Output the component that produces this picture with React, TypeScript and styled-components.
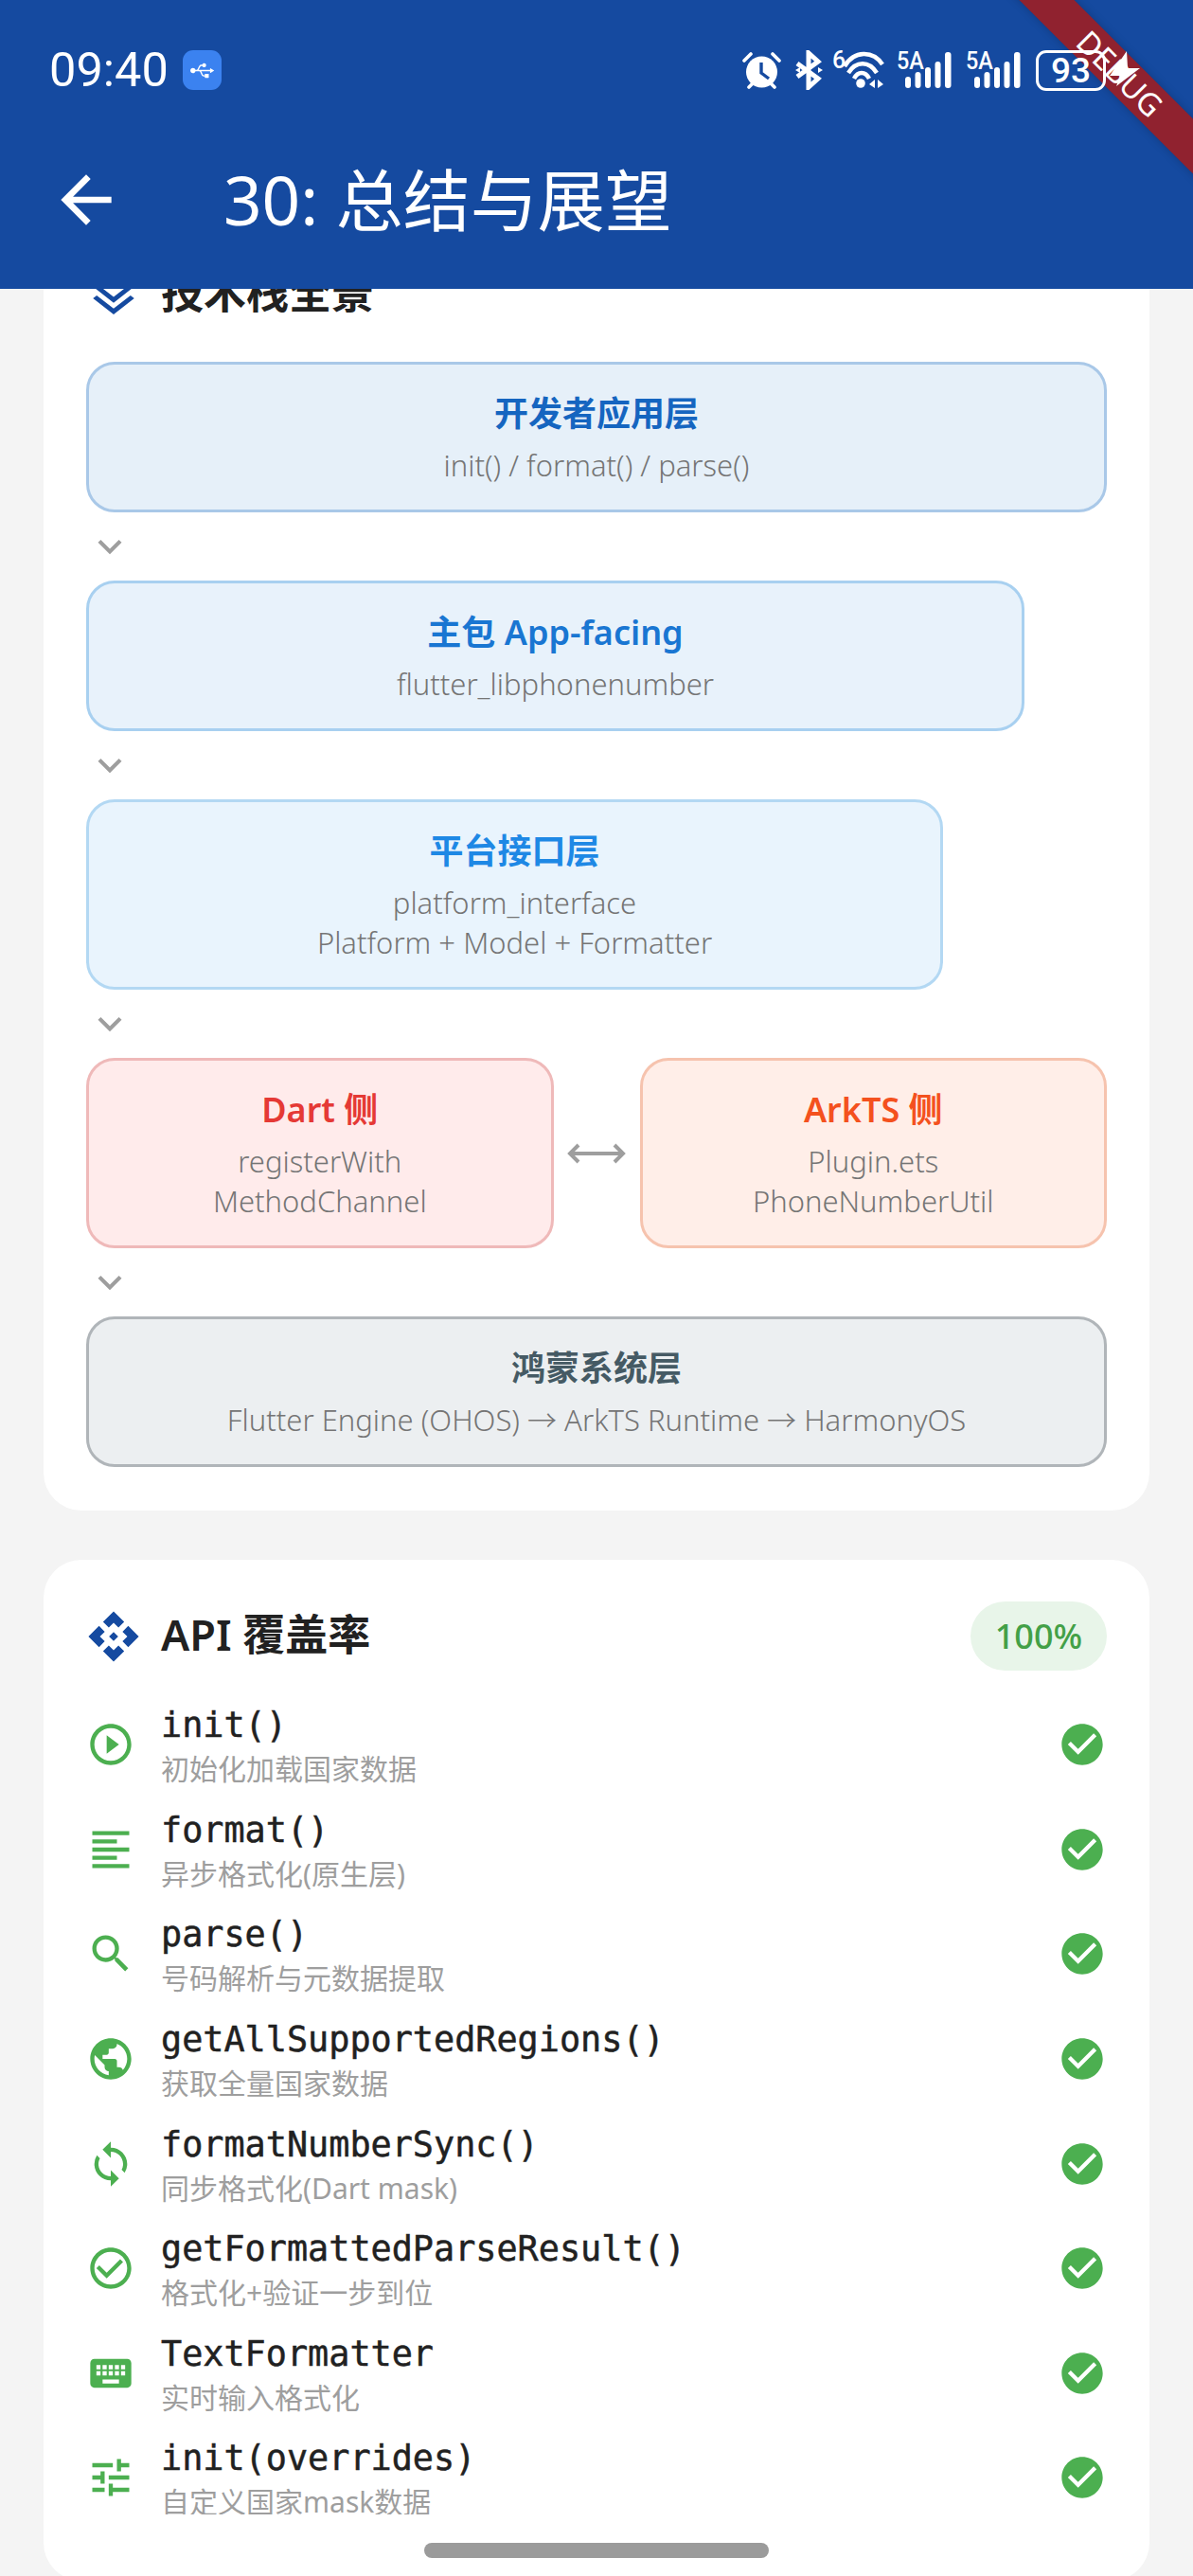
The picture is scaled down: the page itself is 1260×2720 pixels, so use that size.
import styled, { createGlobalStyle } from 'styled-components'
import { ReactNode } from 'react'
import { FaUsb } from 'react-icons/fa'
import {
    MdApi,
    MdArrowBack,
    MdCheckCircle,
    MdCheckCircleOutline,
    MdFormatAlignLeft,
    MdKeyboard,
    MdKeyboardArrowDown,
    MdOutlineLayers,
    MdPlayCircleOutline,
    MdPublic,
    MdSearch,
    MdSync,
    MdTune,
} from 'react-icons/md'

const SANS = `"Noto Sans", "Noto Sans CJK SC", sans-serif`
const MONO = `"DejaVu Sans Mono", "Noto Sans CJK SC", monospace`

const GlobalStyle = createGlobalStyle`
    html, body {
        margin: 0;
        padding: 0;
        background: #f4f4f4;
        font-family: ${SANS};
    }
`

const apis = [
    { icon: <MdPlayCircleOutline />, name: 'init()', desc: '初始化加载国家数据' },
    { icon: <MdFormatAlignLeft />, name: 'format()', desc: '异步格式化(原生层)' },
    { icon: <MdSearch />, name: 'parse()', desc: '号码解析与元数据提取' },
    { icon: <MdPublic />, name: 'getAllSupportedRegions()', desc: '获取全量国家数据' },
    { icon: <MdSync />, name: 'formatNumberSync()', desc: '同步格式化(Dart mask)' },
    { icon: <MdCheckCircleOutline />, name: 'getFormattedParseResult()', desc: '格式化+验证一步到位' },
    { icon: <MdKeyboard />, name: 'TextFormatter', desc: '实时输入格式化' },
    { icon: <MdTune />, name: 'init(overrides)', desc: '自定义国家mask数据' },
]

const SignalIcon = () => (
    <Signal>
        <SignalLabel>5A</SignalLabel>
        <svg width="58" height="42" viewBox="0 0 58 42" fill="#fff">
            <rect x="9" y="28" width="6" height="12" rx="3" />
            <rect x="19.500" y="23" width="6" height="17" rx="3" />
            <rect x="30" y="18" width="6" height="22" rx="3" />
            <rect x="40.500" y="12" width="6" height="28" rx="3" />
            <rect x="51" y="2" width="6.500" height="38" rx="3" />
        </svg>
    </Signal>
)

const StatusIcons = () => (
    <StatusRight>
        <StatusItem>
            <svg width="41" height="42" viewBox="0 0 41 42" fill="#fff">
                <circle cx="20.500" cy="23" r="16.500" />
                <path d="M20 13v11l8 6" fill="none" stroke="#154aa0" strokeWidth="3.400" />
                <path d="M2 11 9 4M39 11 32 4M7 39l4-4M34 39l-4-4" stroke="#fff" strokeWidth="3.600" strokeLinecap="round" />
            </svg>
        </StatusItem>
        <StatusItem $gap={15}>
            <svg width="29" height="42" viewBox="0 0 29 42" fill="none" stroke="#fff" strokeWidth="5">
                <path d="M2 14 24 30 14 39V3l10 9L2 28" />
                <path d="M0 21l5-3v6zM29 21l-5-3v6z" fill="#fff" stroke="none" />
            </svg>
        </StatusItem>
        <StatusItem $gap={11}>
            <WifiLabel>6</WifiLabel>
            <svg width="54" height="42" viewBox="0 0 54 42" fill="none" stroke="#fff" strokeWidth="4.500">
                <path d="M12 17C22 0 42 0 52 15" />
                <path d="M16 24C24 11 38 11 46 24" />
                <path d="M22 30C26 22 34 22 38 30" />
                <circle cx="29" cy="35" r="4.800" fill="#fff" stroke="none" />
                <path d="M38 36l6-5v9zM47 31l6 5-6 4z" fill="#fff" stroke="none" />
            </svg>
        </StatusItem>
        <StatusItem $gap={13}>
            <SignalIcon />
        </StatusItem>
        <StatusItem $gap={15}>
            <SignalIcon />
        </StatusItem>
        <StatusItem $gap={16}>
            <Battery>93</Battery>
        </StatusItem>
        <StatusItem $gap={2}>
            <svg width="34" height="42" viewBox="0 0 34 42" fill="#fff">
                <path d="M20 1 2 27h11L9 38 34 19H21z" />
            </svg>
        </StatusItem>
    </StatusRight>
)

const tones = {
    app: { bg: '#e6f0f9', border: '#a9c8e8', title: '#1565c0' },
    main: { bg: '#e8f2fb', border: '#a8d0f0', title: '#1976d2' },
    iface: { bg: '#e9f4fd', border: '#b3d8f3', title: '#1e88e5' },
    dart: { bg: '#ffebeb', border: '#efb9b9', title: '#e53935' },
    ark: { bg: '#ffeee8', border: '#f6c3ae', title: '#f4511e' },
    system: { bg: '#eceff1', border: '#b0b5b9', title: '#455a64' },
}

type LayerProps = {
    title: string
    lines: string[]
    tone: keyof typeof tones
    inset?: number
}

const Layer = ({ title, lines, tone, inset = 0 }: LayerProps) => (
    <LayerBox $tone={tone} $inset={inset}>
        <LayerTitle $tone={tone}>{title}</LayerTitle>
        {lines.map((line) => (
            <LayerLine key={line}>{line}</LayerLine>
        ))}
    </LayerBox>
)

const Down = () => (
    <DownRow>
        <MdKeyboardArrowDown />
    </DownRow>
)

const CardHeader = ({ icon, title, tall, children }: { icon: ReactNode; title: string; tall?: boolean; children?: ReactNode }) => (
    <HeaderRow $tall={tall}>
        <HeaderIcon>{icon}</HeaderIcon>
        <HeaderTitle>{title}</HeaderTitle>
        {children}
    </HeaderRow>
)

export default function App() {
    return (
        <Page>
            <GlobalStyle />
            <AppBar>
                <DebugBand />
                <StatusBar>
                    <StatusLeft>
                        <Clock>09:40</Clock>
                        <UsbBadge>
                            <FaUsb />
                        </UsbBadge>
                    </StatusLeft>
                    <StatusIcons />
                </StatusBar>
                <DebugLabel>DEBUG</DebugLabel>
                <Toolbar>
                    <BackButton>
                        <MdArrowBack />
                    </BackButton>
                    <Title>30: 总结与展望</Title>
                </Toolbar>
            </AppBar>
            <Scroller>
                <Card>
                    <CardHeader icon={<MdOutlineLayers />} title="技术栈全景" />
                    <Stack>
                        <Layer tone="app" title="开发者应用层" lines={['init() / format() / parse()']} />
                        <Down />
                        <Layer tone="main" inset={87} title="主包 App-facing" lines={['flutter_libphonenumber']} />
                        <Down />
                        <Layer
                            tone="iface"
                            inset={173}
                            title="平台接口层"
                            lines={['platform_interface', 'Platform + Model + Formatter']}
                        />
                        <Down />
                        <BridgeRow>
                            <Layer tone="dart" title="Dart 侧" lines={['registerWith', 'MethodChannel']} />
                            <BridgeArrow>
                                <svg width="62" height="24" viewBox="0 0 62 24" fill="none" stroke="#9e9e9e" strokeWidth="4">
                                    <path d="M3 12h56M12 3l-9 9 9 9M50 3l9 9-9 9" />
                                </svg>
                            </BridgeArrow>
                            <Layer tone="ark" title="ArkTS 侧" lines={['Plugin.ets', 'PhoneNumberUtil']} />
                        </BridgeRow>
                        <Down />
                        <Layer
                            tone="system"
                            title="鸿蒙系统层"
                            lines={['Flutter Engine (OHOS) → ArkTS Runtime → HarmonyOS']}
                        />
                    </Stack>
                </Card>
                <Card>
                    <CardHeader icon={<MdApi />} title="API 覆盖率" tall>
                        <Pill>100%</Pill>
                    </CardHeader>
                    <ApiList>
                        {apis.map((api) => (
                            <ApiRow key={api.name}>
                                <ApiIcon>{api.icon}</ApiIcon>
                                <ApiText>
                                    <ApiName>{api.name}</ApiName>
                                    <ApiDesc>{api.desc}</ApiDesc>
                                </ApiText>
                                <ApiIcon>
                                    <MdCheckCircle />
                                </ApiIcon>
                            </ApiRow>
                        ))}
                    </ApiList>
                </Card>
            </Scroller>
            <BottomClip />
            <HomeBar />
        </Page>
    )
}

const Page = styled.div`
    position: relative;
    display: flex;
    flex-direction: column;
    width: 1260px;
    height: 2720px;
    overflow: hidden;
    background: #f4f4f4;
`

const AppBar = styled.header`
    position: relative;
    z-index: 1;
    flex: none;
    height: 305px;
    overflow: hidden;
    background: #154aa0;
    color: #fff;
`

const DebugBand = styled.div`
    position: absolute;
    top: 57px;
    left: 1033px;
    width: 300px;
    height: 41px;
    background: #90222f;
    box-shadow: 0 0 10px rgba(0, 0, 0, 0.22);
    transform: rotate(45deg);
`

const DebugLabel = styled.div`
    position: absolute;
    top: 57px;
    left: 1033px;
    width: 300px;
    color: #fff;
    font: 400 33px/41px 'Noto Sans', sans-serif;
    text-align: center;
    transform: rotate(45deg);
`

const StatusBar = styled.div`
    position: relative;
    display: flex;
    align-items: center;
    justify-content: space-between;
    height: 148px;
    padding: 0 56px 0 52px;
`

const StatusLeft = styled.div`
    display: flex;
    align-items: center;
    gap: 15px;
`

const Clock = styled.span`
    font: 400 50.5px/60px Roboto, sans-serif;
`

const UsbBadge = styled.span`
    display: flex;
    align-items: center;
    justify-content: center;
    width: 41px;
    height: 42px;
    border-radius: 11px;
    background: #3b82f0;
    font-size: 25px;
`

const StatusRight = styled.div`
    display: flex;
    align-items: center;
`

const StatusItem = styled.span<{ $gap?: number }>`
    position: relative;
    display: flex;
    margin-left: ${(p) => p.$gap ?? 0}px;
`

const Signal = styled.span`
    position: relative;
    display: flex;
`

const SignalLabel = styled.span`
    position: absolute;
    top: -4px;
    left: 0;
    font: 500 26px/30px Roboto, sans-serif;
    transform: scaleX(0.9);
    transform-origin: left;
`

const WifiLabel = styled.span`
    position: absolute;
    top: -4px;
    left: -1px;
    font: 500 25px/30px Roboto, sans-serif;
`

const Battery = styled.span`
    display: flex;
    align-items: center;
    justify-content: center;
    box-sizing: border-box;
    width: 74px;
    height: 43px;
    border: 3px solid #fff;
    border-radius: 11px;
    font: 500 37px/37px Roboto, sans-serif;
`

const Toolbar = styled.div`
    display: flex;
    align-items: center;
    height: 125px;
    padding-left: 51px;
`

const BackButton = styled.span`
    display: flex;
    font-size: 80px;
`

const Title = styled.h1`
    margin: 0 0 0 105px;
    font: 400 71px/90px ${SANS};
`

const Scroller = styled.main`
    display: flex;
    flex-direction: column;
    gap: 52px;
    margin-top: -70px;
    padding: 0 46px;
`

const Card = styled.section`
    padding: 46px 45px;
    border-radius: 40px;
    background: #fff;

    & + & {
        padding-top: 44px;
        padding-bottom: 53px;
    }
`

const HeaderRow = styled.div<{ $tall?: boolean }>`
    display: flex;
    align-items: center;
    gap: 21px;
    height: ${(p) => (p.$tall ? 73 : 58)}px;
    margin-bottom: ${(p) => (p.$tall ? 23 : 43)}px;
`

const HeaderIcon = styled.span`
    display: flex;
    color: #154aa0;
    font-size: 58px;
`

const HeaderTitle = styled.h2`
    flex: 1;
    margin: 0;
    padding-bottom: 3px;
    color: #212121;
    font: 600 45px/58px ${SANS};
`

const Pill = styled.span`
    width: 144px;
    border-radius: 37px;
    background: #e8f5e9;
    color: #43a047;
    font: 500 36px/73px ${SANS};
    text-align: center;
`

const Stack = styled.div`
    display: flex;
    flex-direction: column;
`

const LayerBox = styled.div<{ $tone: keyof typeof tones; $inset: number }>`
    flex: 1;
    box-sizing: border-box;
    margin-right: ${(p) => p.$inset}px;
    padding: 30px 0 29px;
    border: 3px solid ${(p) => tones[p.$tone].border};
    border-radius: 30px;
    background: ${(p) => tones[p.$tone].bg};
    text-align: center;
`

const LayerTitle = styled.div<{ $tone: keyof typeof tones }>`
    margin-top: -3px;
    margin-bottom: 8px;
    color: ${(p) => tones[p.$tone].title};
    font: 600 36px/50px ${SANS};
`

const LayerLine = styled.div`
    color: #757575;
    font: 300 31px/42px ${SANS};

    &:last-child {
        margin-bottom: -3px;
    }
`

const DownRow = styled.div`
    display: flex;
    align-items: center;
    height: 72px;
    color: #9e9e9e;
    font-size: 50px;
`

const BridgeRow = styled.div`
    display: flex;
`

const BridgeArrow = styled.div`
    display: flex;
    flex: none;
    align-items: center;
    justify-content: center;
    width: 91px;
`

const ApiList = styled.div`
    display: flex;
    flex-direction: column;
`

const ApiRow = styled.div`
    display: flex;
    align-items: center;
    gap: 27px;
    height: 110.6px;
`

const ApiIcon = styled.span`
    display: flex;
    color: #4caf50;
    font-size: 52px;
`

const ApiText = styled.div`
    flex: 1;
    padding-top: 4px;
`

const ApiName = styled.div`
    color: #212121;
    font: 400 36.8px/48px ${MONO};
    -webkit-text-stroke: 0.5px #212121;
`

const ApiDesc = styled.div`
    color: #9e9e9e;
    font: 400 30px/44px ${SANS};
`

const BottomClip = styled.div`
    position: absolute;
    top: 2655px;
    left: 160px;
    width: 900px;
    height: 24px;
    background: #fff;
`

const HomeBar = styled.div`
    position: absolute;
    bottom: 19px;
    left: 448px;
    width: 364px;
    height: 16px;
    border-radius: 8px;
    background: #9b9b9b;
`
